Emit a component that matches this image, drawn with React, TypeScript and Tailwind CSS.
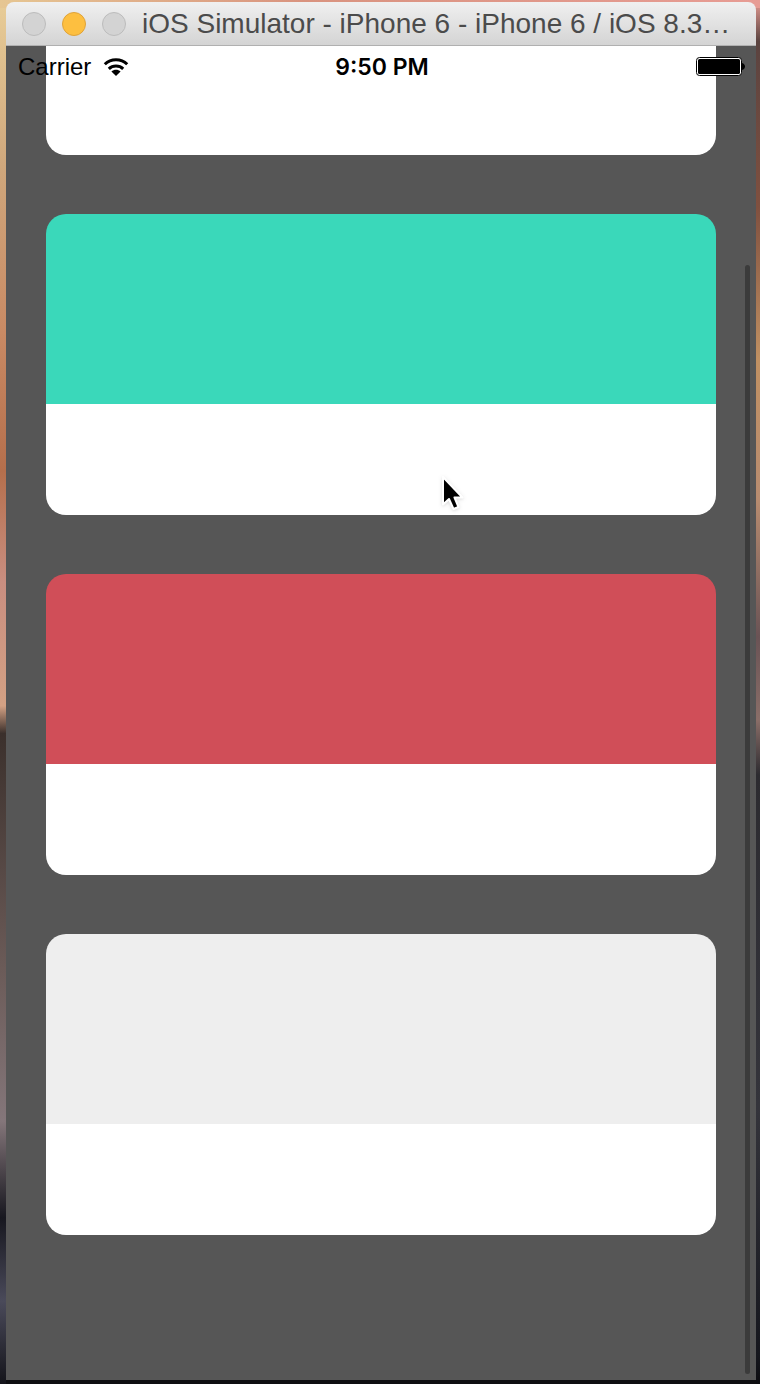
const cards = [
  { id: 'first', cover: 'bg-[#4a90d9]' },
  { id: 'green', cover: 'bg-[#3ad8ba]' },
  { id: 'red', cover: 'bg-[#d04e58]' },
  { id: 'grey', cover: 'bg-[#eeeeee]' },
];

function TitleBar() {
  return (
    <header className="flex h-11 items-center overflow-hidden rounded-t-lg border-b border-[#b0b0b0] bg-linear-to-b from-[#f0f0f0] to-[#d4d4d4] pl-4">
      <div className="flex shrink-0 gap-4">
        <button type="button" aria-label="Close" className="size-6 rounded-full border border-[#bcbcbc] bg-[#d3d3d3]" />
        <button type="button" aria-label="Minimize" className="size-6 rounded-full border border-[#dfa33a] bg-[#fdbf40]" />
        <button type="button" aria-label="Zoom" className="size-6 rounded-full border border-[#bcbcbc] bg-[#d3d3d3]" />
      </div>
      <h1 className="ml-4 whitespace-nowrap text-[28px] leading-8 text-[#4b4b4b]">
        iOS Simulator - iPhone 6 - iPhone 6 / iOS 8.3…
      </h1>
    </header>
  );
}

function WifiIcon() {
  return (
    <svg viewBox="0 0 26 20" className="h-5 w-[26px]" fill="none" stroke="#000" strokeWidth="3" aria-hidden="true">
      <path d="M1.8 7.3C8 1.1 18 1.1 24.2 7.3" />
      <path d="M5.8 11.8C9.8 8 16.2 8 20.2 11.8" />
      <path d="M13 19 8.4 14.5C11 12.3 15 12.3 17.6 14.5Z" fill="#000" stroke="none" />
    </svg>
  );
}

function BatteryIcon() {
  return (
    <svg viewBox="0 0 50 20" className="h-5 w-[50px]" aria-hidden="true">
      <rect x="0.5" y="0.5" width="45" height="18" rx="3" fill="#fff" stroke="#000" />
      <rect x="2" y="2" width="42" height="15" rx="1.5" fill="#000" />
      <path d="M46 6C50 7 50 12 46 13Z" fill="#000" />
    </svg>
  );
}

function StatusBar() {
  return (
    <div className="absolute inset-x-0 top-0 grid h-[42px] grid-cols-3 items-center pl-3 pr-2.5 text-2xl leading-6 text-black">
      <div className="flex items-center gap-3">
        <span>Carrier</span>
        <WifiIcon />
      </div>
      <time className="text-center font-[Inter] text-[23px] font-semibold">9:50 PM</time>
      <div className="flex justify-end">
        <BatteryIcon />
      </div>
    </div>
  );
}

function Pointer() {
  return (
    <svg viewBox="0 0 26 36" className="absolute left-[58%] top-[429px] h-9 w-[26px] drop-shadow" aria-hidden="true">
      <path
        d="M2 2V29.5L8 24L12.5 34L17.5 32L13.5 22.5H21.5Z"
        fill="#000"
        stroke="#fff"
        strokeWidth="2"
        strokeLinejoin="round"
      />
    </svg>
  );
}

export default function App() {
  return (
    <div className="min-h-screen bg-[linear-gradient(90deg,#e6c692,#d9937f_40%,#e79c94),linear-gradient(180deg,#e8cd98_0%,#cfa77c_12%,#c98a64_24%,#b56f4c_34%,#c98e80_42%,#d3a184_51%,#3b302c_53%,#6b5b58_70%,#84767a_81%,#17171f_88%,#4a4a5a_94%,#14141a_100%),linear-gradient(180deg,#e79c94_0%,#5a4340_3%,#80503f_15%,#c09062_26%,#b88c70_36%,#6a5355_46%,#8a6e68_52%,#2c2b30_56%,#34343b_80%,#15161d_98%,#0c0c10_100%)] bg-[size:100%_8px,50%_100%,50%_100%] bg-[position:0_0,0_0,100%_0] bg-no-repeat pb-1 pl-1.5 pr-1 pt-0.5 font-['Liberation_Sans',Arial,sans-serif]">
      <TitleBar />
      <main className="relative overflow-hidden bg-[#565656]">
        <div className="-mt-48 flex flex-col gap-[59px] px-10 pb-[145px]">
          {cards.map((card) => (
            <article key={card.id}>
              <div className={`h-[190px] rounded-t-[20px] ${card.cover}`} />
              <div className="h-[111px] rounded-b-[20px] bg-white" />
            </article>
          ))}
        </div>
        <StatusBar />
        <div className="absolute bottom-1.5 right-1.5 top-[219px] w-[5px] rounded-full bg-[#3b3b3b]" />
        <Pointer />
      </main>
      <div className="-mb-1 h-1 bg-[#0e0e11]" />
    </div>
  );
}
